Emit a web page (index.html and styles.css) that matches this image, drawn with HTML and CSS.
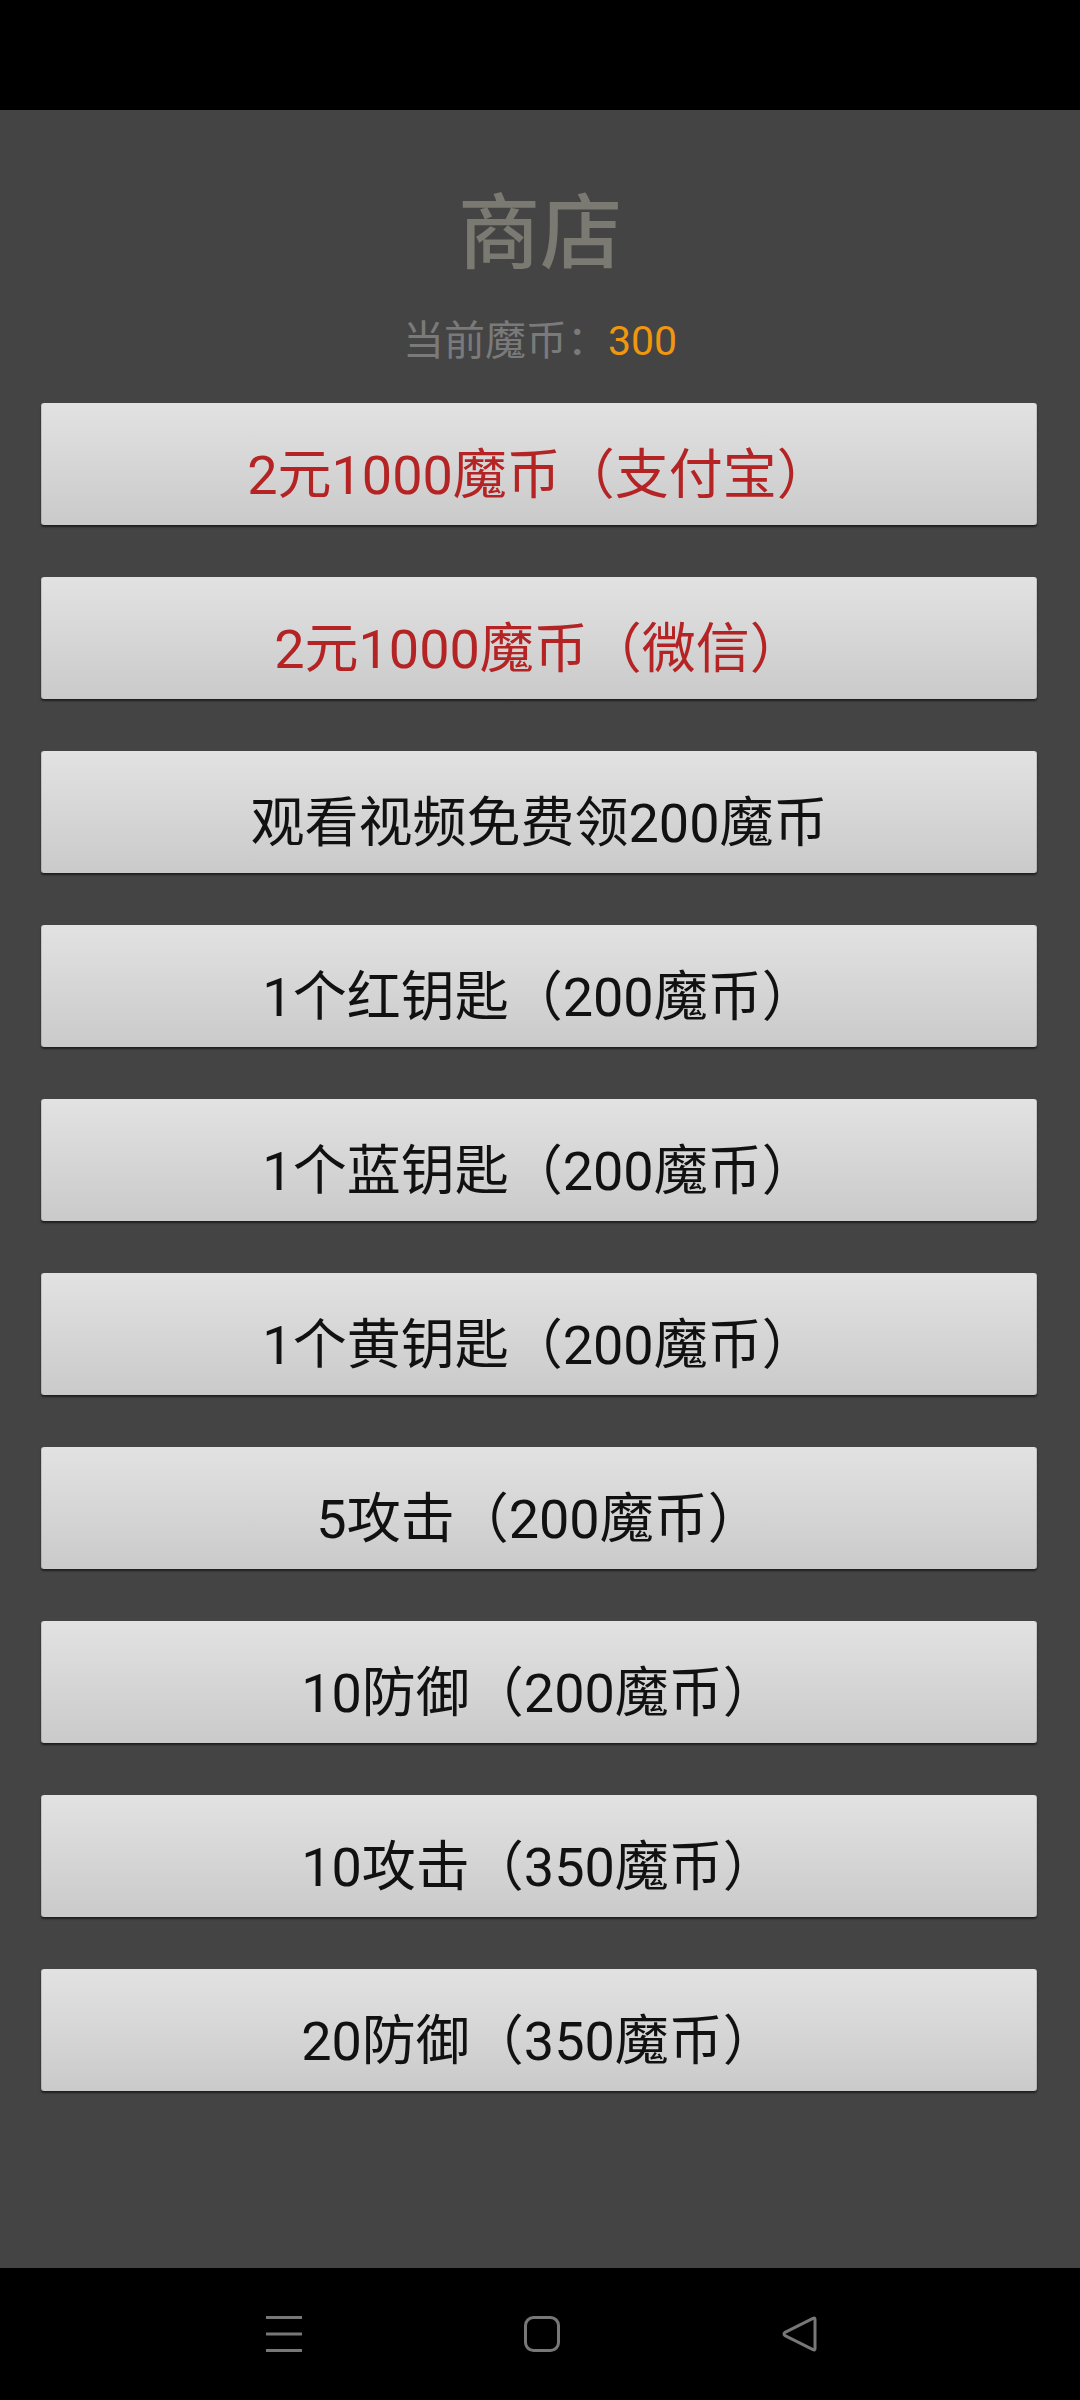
FILE: index.html
```html
<!DOCTYPE html>
<html lang="zh-CN">
<head>
    <meta charset="UTF-8">
    <meta name="viewport" content="width=device-width, initial-scale=1.0">
    <title>商店</title>
    <link rel="stylesheet" href="styles.css">
</head>
<body>
    <div class="status-bar"></div>

    <div class="shop">
        <h1 class="shop-title">商店</h1>
        <div class="coins">当前魔币：<span class="coins-num">300</span></div>

        <div class="item-list">
            <button class="item pay">2元1000魔币（支付宝）</button>
            <button class="item pay">2元1000魔币（微信）</button>
            <button class="item">观看视频免费领200魔币</button>
            <button class="item">1个红钥匙（200魔币）</button>
            <button class="item">1个蓝钥匙（200魔币）</button>
            <button class="item">1个黄钥匙（200魔币）</button>
            <button class="item">5攻击（200魔币）</button>
            <button class="item">10防御（200魔币）</button>
            <button class="item">10攻击（350魔币）</button>
            <button class="item">20防御（350魔币）</button>
        </div>
    </div>

    <!-- 系统导航栏 -->
    <div class="nav-bar">
        <svg class="nav-icon" viewBox="0 0 36 36">
            <path d="M0 1.5H36M0 18H36M0 34.5H36" stroke="#777" stroke-width="3" fill="none"/>
        </svg>
        <svg class="nav-icon" viewBox="0 0 36 36">
            <rect x="1.5" y="1.5" width="33" height="33" rx="8" stroke="#777" stroke-width="3" fill="none"/>
        </svg>
        <svg class="nav-icon" viewBox="0 0 36 36">
            <path d="M33 3.5Q33 1 31 2.4L3 16.3Q1 18 3 19.7L31 33.6Q33 35 33 32.5Z" stroke="#777" stroke-width="3" stroke-linejoin="round" fill="none"/>
        </svg>
    </div>
</body>
</html>
```

FILE: styles.css
```css
:root {
    --bg-color: #444444;
    --title-color: #7a7a72;
    --coin-color: #f0960f;
    --pay-color: #b52424;
}

html, body {
    margin: 0;
    padding: 0;
}

body {
    width: 1080px;
    height: 2400px;
    display: flex;
    flex-direction: column;
    background: #000;
    font-family: Roboto, "Noto Sans CJK SC", sans-serif;
}

.status-bar {
    height: 110px;
    background: #000;
}

/* 商店主体 */
.shop {
    flex: 1;
    background: var(--bg-color);
    display: flex;
    flex-direction: column;
    align-items: center;
}

.shop-title {
    margin: 76px 0 0;
    font-size: 82px;
    line-height: 82px;
    font-weight: 500;
    color: var(--title-color);
    font-family: "Noto Sans CJK SC", sans-serif;
}

.coins {
    margin-top: 53px;
    font-size: 41px;
    line-height: 41px;
    color: #7a7a7a;
}

.coins-num {
    color: var(--coin-color);
}

.item-list {
    margin-top: 41px;
    width: 996px;
    margin-left: -2px;
    display: flex;
    flex-direction: column;
    gap: 52px;
}

/* 按钮样式 */
.item {
    height: 122px;
    padding: 13px 0 0;
    border: none;
    border-radius: 3px;
    background: linear-gradient(#e2e2e2, #cacaca);
    box-shadow: 0 2px 2px rgba(0,0,0,0.55), inset 1px 0 0 rgba(0,0,0,0.12), inset -1px 0 0 rgba(0,0,0,0.12);
    font-family: Roboto, "Noto Sans CJK SC", sans-serif;
    font-size: 54px;
    color: #111;
    text-align: center;
}

.item.pay {
    color: var(--pay-color);
}

/* 导航栏 */
.nav-bar {
    height: 132px;
    background: #000;
    display: flex;
    justify-content: center;
    align-items: center;
    gap: 222px;
    padding-left: 4px;
}

.nav-icon {
    width: 36px;
    height: 36px;
}
```
